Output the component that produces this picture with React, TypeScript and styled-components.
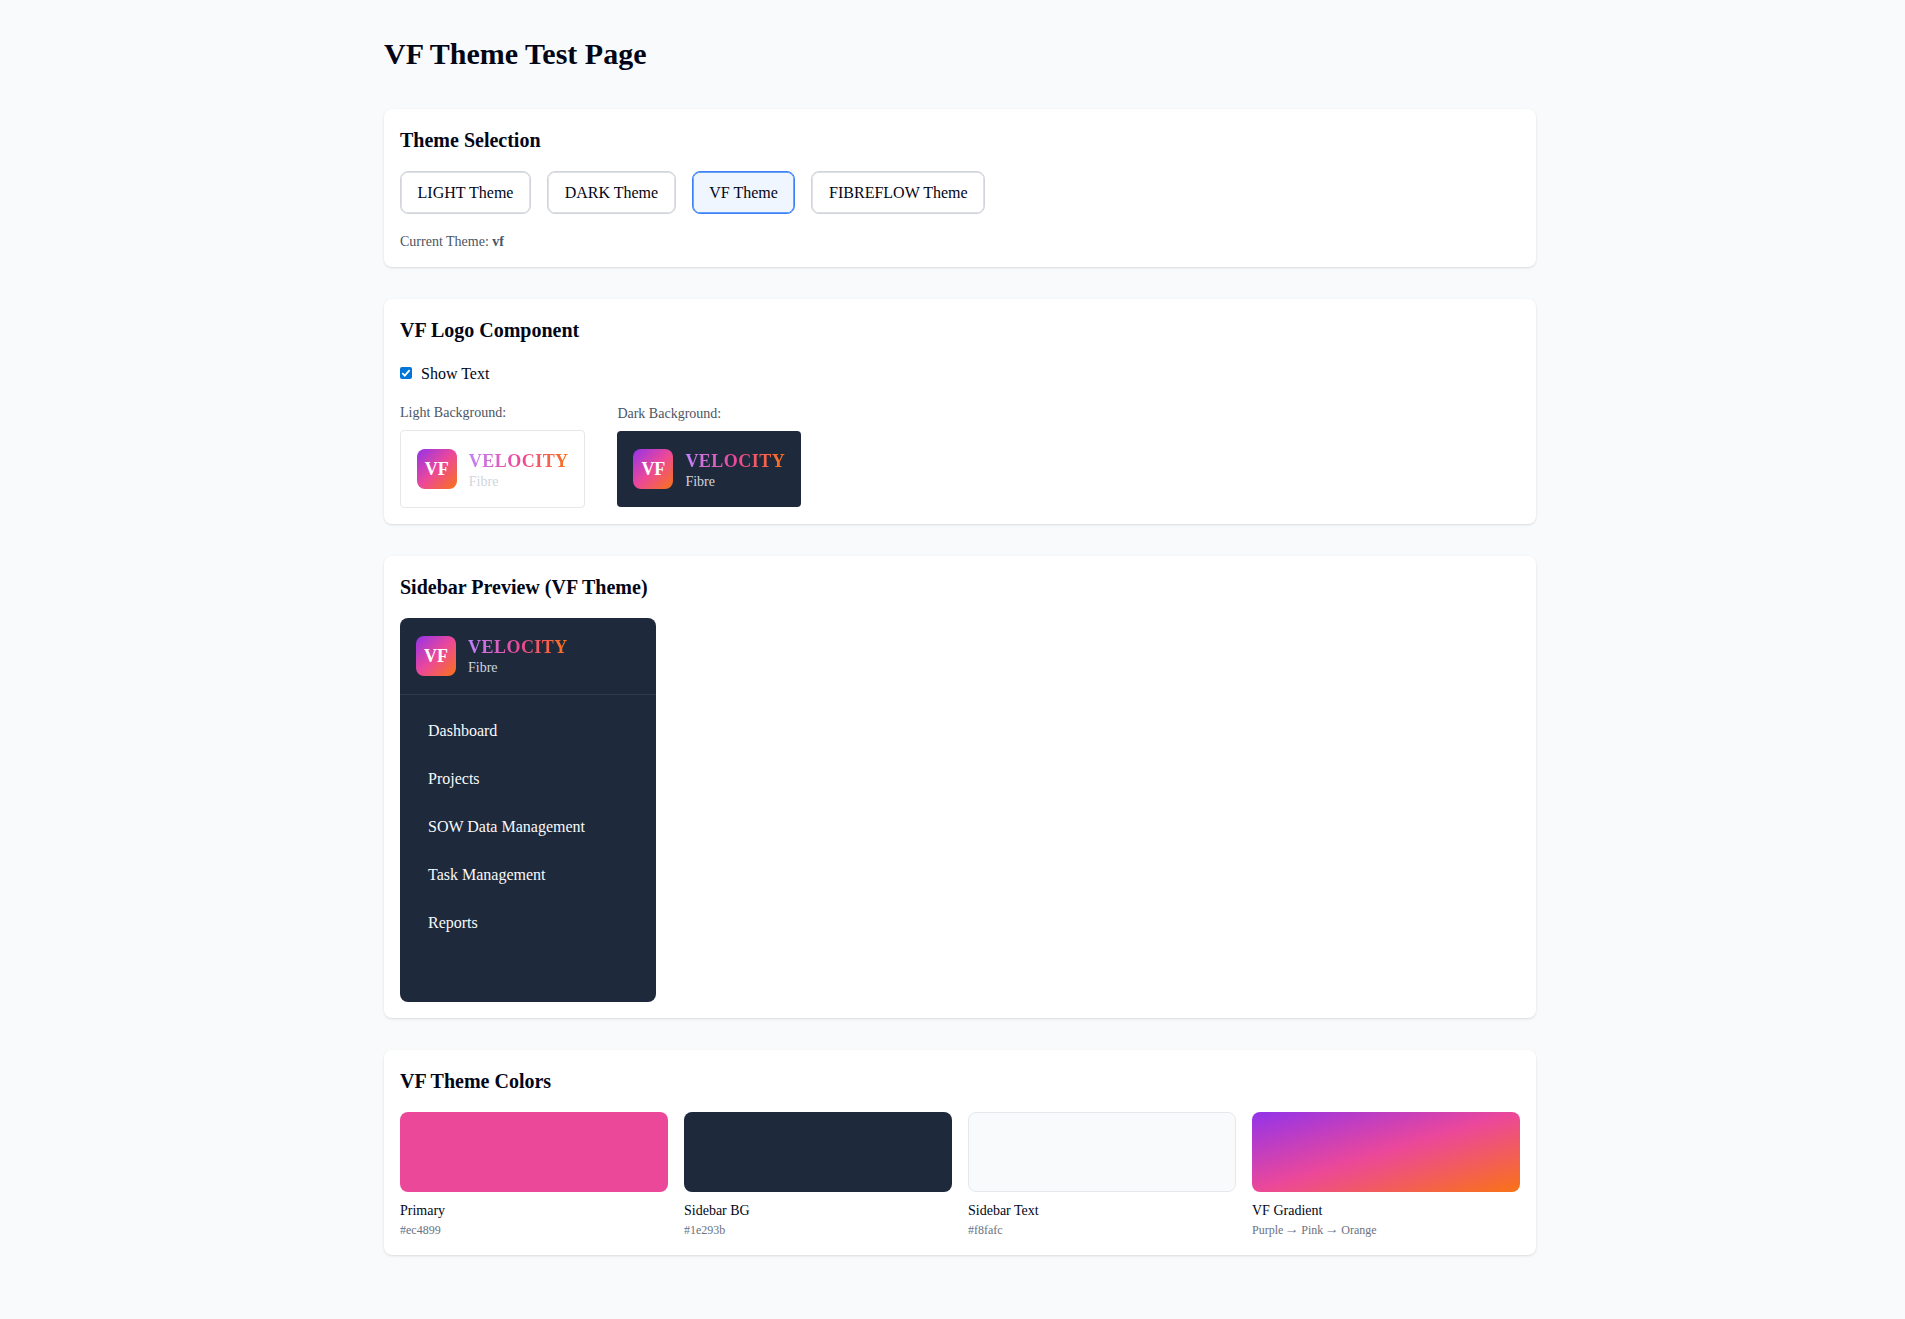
import React, { useState } from 'react';
import styled, { createGlobalStyle } from 'styled-components';

const GlobalStyle = createGlobalStyle`
  *, *::before, *::after { box-sizing: border-box; }
  body {
    margin: 0;
    background: #f9fafb;
    color: #020617;
    font-family: "Liberation Serif", "Times New Roman", serif;
    font-size: 16px;
    line-height: 1.5;
    overflow: hidden;
  }
  h1, h2, p { margin: 0; }
`;

const vfGradient = 'linear-gradient(to bottom right, #9333ea 0%, #ec4899 50%, #f97316 100%)';

const Page = styled.main`
  width: 1920px;
  min-height: 1319px;
  padding: 32px 0;
  background: #f9fafb;
`;

const Container = styled.div`
  width: 1152px;
  margin: 0 auto;
  display: flex;
  flex-direction: column;
  gap: 32px;
`;

const PageTitle = styled.h1`
  font-size: 30px;
  line-height: 44.8px;
  font-weight: 700;
`;

const Card = styled.section`
  padding: 16px;
  background: #fff;
  border-radius: 8px;
  box-shadow: 0 1px 3px rgba(0, 0, 0, 0.1), 0 1px 2px -1px rgba(0, 0, 0, 0.1);
`;

const CardTitle = styled.h2`
  margin-bottom: 16px;
  font-size: 20px;
  line-height: 30px;
  font-weight: 600;
`;

const ButtonRow = styled.div`
  display: flex;
  gap: 16px;
`;

const ThemeButton = styled.button<{ $active: boolean }>`
  height: 43.2px;
  padding: 1px 16.6px 0;
  border: 1px solid ${({ $active }) => ($active ? '#3b82f6' : '#d1d5db')};
  border-radius: 8px;
  box-shadow: inset 0 0 0 0.7px ${({ $active }) => ($active ? '#3b82f6' : '#d1d5db')};
  background: ${({ $active }) => ($active ? '#eff6ff' : '#fff')};
  color: inherit;
  font: inherit;
`;

const CurrentTheme = styled.p`
  margin-top: 16px;
  padding-top: 2px;
  font-size: 14px;
  line-height: 19px;
  color: #4b5563;
`;

const CheckLabel = styled.label`
  display: flex;
  align-items: center;
  gap: 9px;
  height: 24px;
  margin-bottom: 16px;
  padding-top: 2px;
`;

const Box = styled.span`
  display: grid;
  place-items: center;
  width: 12px;
  height: 12px;
  margin-top: -2px;
  border-radius: 2px;
  background: #0075d8;
`;

const HiddenInput = styled.input`
  display: none;
`;

const Previews = styled.div`
  display: flex;
  align-items: center;
  gap: 32px;
`;

const PreviewLabel = styled.p`
  margin-bottom: 8px;
  padding-top: 2px;
  font-size: 14px;
  line-height: 19px;
  color: #4b5563;
`;

const PreviewBox = styled.div<{ $dark?: boolean }>`
  padding: ${({ $dark }) => ($dark ? '16px' : '15.8px')};
  border: ${({ $dark }) => ($dark ? 'none' : '1px solid #e5e7eb')};
  border-radius: 4px;
  background: ${({ $dark }) => ($dark ? '#1e293b' : '#fff')};
`;

const LogoRow = styled.div`
  display: flex;
  align-items: center;
  gap: 12px;
  height: 44px;
`;

const LogoMark = styled.div`
  display: grid;
  place-items: center;
  width: 40px;
  height: 40px;
  padding-top: 1px;
  border-radius: 8px;
  background: ${vfGradient};
  color: #fff;
  font-size: 18px;
  font-weight: 700;
`;

const LogoText = styled.div`
  display: flex;
  flex-direction: column;
  align-self: flex-start;
  padding-top: 2.8px;
`;

const LogoName = styled.span`
  font-size: 18px;
  line-height: 22px;
  font-weight: 700;
  letter-spacing: 0.47px;
  background: linear-gradient(to right, #c084fc, #ec4899, #f97316);
  background-clip: text;
  -webkit-background-clip: text;
  color: transparent;
`;

const LogoSub = styled.span`
  font-size: 14px;
  line-height: 20px;
  color: #d1d5db;
`;

const Sidebar = styled.aside`
  width: 256px;
  height: 384px;
  border-radius: 8px;
  background: #1e293b;
  overflow: hidden;
`;

const SidebarHeader = styled.div`
  padding: 16px;
  border-bottom: 1px solid rgba(255, 255, 255, 0.08);
`;

const Nav = styled.nav`
  display: flex;
  flex-direction: column;
  gap: 8px;
  padding: 16px;
`;

const NavItem = styled.div`
  padding: 8px 12px;
  color: #f8fafc;
`;

const Swatches = styled.div`
  display: grid;
  grid-template-columns: repeat(4, 1fr);
  gap: 16px;
`;

const Swatch = styled.div<{ $fill: string; $bordered?: boolean }>`
  height: 80px;
  margin-bottom: 8px;
  border-radius: 8px;
  border: ${({ $bordered }) => ($bordered ? '1px solid #e5e7eb' : 'none')};
  background: ${({ $fill }) => $fill};
`;

const SwatchName = styled.p`
  font-size: 14px;
  line-height: 21px;
`;

const SwatchValue = styled.p`
  font-size: 12px;
  line-height: 18px;
  color: #6b7280;
`;

const Arrow = styled.span`
  display: inline-block;
  transform: translateY(-1px) scaleX(1.2);
`;

const themes = ['light', 'dark', 'vf', 'fibreflow'];
const navItems = ['Dashboard', 'Projects', 'SOW Data Management', 'Task Management', 'Reports'];
const colors: { name: string; value: React.ReactNode; fill: string; bordered?: boolean }[] = [
  { name: 'Primary', value: '#ec4899', fill: '#ec4899' },
  { name: 'Sidebar BG', value: '#1e293b', fill: '#1e293b' },
  { name: 'Sidebar Text', value: '#f8fafc', fill: '#f8fafc', bordered: true },
  {
    name: 'VF Gradient',
    value: (
      <>
        Purple <Arrow>→</Arrow> Pink <Arrow>→</Arrow> Orange
      </>
    ),
    fill: vfGradient,
  },
];

function Logo({ showText = true }: { showText?: boolean }) {
  return (
    <LogoRow>
      <LogoMark>VF</LogoMark>
      {showText && (
        <LogoText>
          <LogoName>VELOCITY</LogoName>
          <LogoSub>Fibre</LogoSub>
        </LogoText>
      )}
    </LogoRow>
  );
}

export default function App() {
  const [theme, setTheme] = useState('vf');
  const [showText, setShowText] = useState(true);

  return (
    <Page>
      <GlobalStyle />
      <Container>
        <PageTitle>VF Theme Test Page</PageTitle>

        <Card>
          <CardTitle>Theme Selection</CardTitle>
          <ButtonRow>
            {themes.map((t) => (
              <ThemeButton key={t} $active={t === theme} onClick={() => setTheme(t)}>
                {t.toUpperCase()} Theme
              </ThemeButton>
            ))}
          </ButtonRow>
          <CurrentTheme>
            Current Theme: <strong>{theme}</strong>
          </CurrentTheme>
        </Card>

        <Card>
          <CardTitle>VF Logo Component</CardTitle>
          <CheckLabel>
            <HiddenInput type="checkbox" checked={showText} onChange={() => setShowText(!showText)} />
            <Box>
              {showText && (
                <svg width="12" height="12" viewBox="0 0 12 12" fill="none">
                  <path d="M2.3 6.2 4.8 8.7 9.6 3.1" stroke="#fff" strokeWidth="1.8" />
                </svg>
              )}
            </Box>
            Show Text
          </CheckLabel>
          <Previews>
            <div>
              <PreviewLabel>Light Background:</PreviewLabel>
              <PreviewBox>
                <Logo showText={showText} />
              </PreviewBox>
            </div>
            <div>
              <PreviewLabel>Dark Background:</PreviewLabel>
              <PreviewBox $dark>
                <Logo showText={showText} />
              </PreviewBox>
            </div>
          </Previews>
        </Card>

        <Card>
          <CardTitle>Sidebar Preview (VF Theme)</CardTitle>
          <Sidebar>
            <SidebarHeader>
              <Logo />
            </SidebarHeader>
            <Nav>
              {navItems.map((item) => (
                <NavItem key={item}>{item}</NavItem>
              ))}
            </Nav>
          </Sidebar>
        </Card>

        <Card>
          <CardTitle>VF Theme Colors</CardTitle>
          <Swatches>
            {colors.map((c) => (
              <div key={c.name}>
                <Swatch $fill={c.fill} $bordered={c.bordered} />
                <SwatchName>{c.name}</SwatchName>
                <SwatchValue>{c.value}</SwatchValue>
              </div>
            ))}
          </Swatches>
        </Card>
      </Container>
    </Page>
  );
}
